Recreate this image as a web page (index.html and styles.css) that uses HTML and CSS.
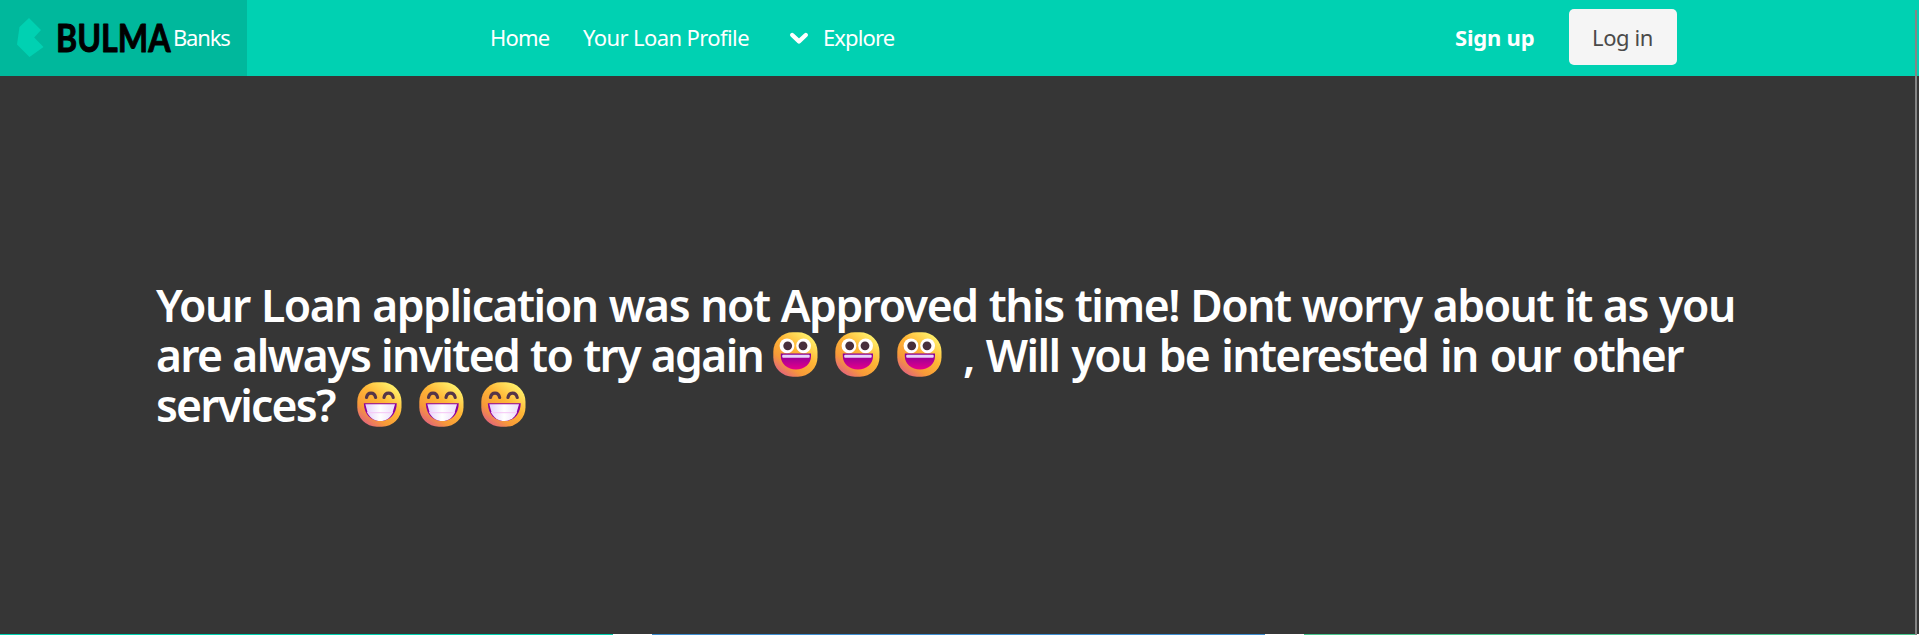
FILE: index.html
```html
<!DOCTYPE html>
<html lang="en">
<head>
<meta charset="utf-8">
<title>Bulma Banks</title>
<link rel="stylesheet" href="styles.css">
</head>
<body>
<svg class="defs" width="0" height="0" aria-hidden="true">
  <defs>
    <linearGradient id="skin" x1="0.85" y1="0.1" x2="0.2" y2="0.95">
      <stop offset="0" stop-color="#fff06a"/><stop offset="0.4" stop-color="#ffb636"/><stop offset="0.75" stop-color="#f79a38"/><stop offset="1" stop-color="#e4657a"/>
    </linearGradient>
    <linearGradient id="mouth" x1="0" y1="0" x2="0" y2="1">
      <stop offset="0" stop-color="#85009a"/><stop offset="1" stop-color="#e6008a"/>
    </linearGradient>
    <linearGradient id="teeth" x1="0" y1="0" x2="1" y2="0">
      <stop offset="0" stop-color="#e4cffa"/><stop offset="0.5" stop-color="#fff"/><stop offset="1" stop-color="#ecdcfb"/>
    </linearGradient>
    <symbol id="open" viewBox="0 0 45 45">
      <rect x="0.3" y="0.3" width="44.2" height="44.4" rx="19.5" fill="url(#skin)"/>
      <circle cx="14" cy="13.8" r="7.4" fill="#fff"/><circle cx="30.6" cy="13.8" r="7.4" fill="#fff"/>
      <circle cx="14.7" cy="13.8" r="4.4" fill="#482f3c"/><circle cx="30" cy="13.8" r="4.4" fill="#482f3c"/>
      <path d="M7.8 21.5H38V24C38 32 31.5 37.5 23 37.5S7.8 32 7.8 24Z" fill="url(#mouth)"/>
      <rect x="9.2" y="22.8" width="27.5" height="3" rx="1" fill="#e8d4fb"/>
    </symbol>
    <symbol id="grin" viewBox="0 0 45 45">
      <rect x="0.3" y="0.3" width="44.2" height="44.4" rx="19.5" fill="url(#skin)"/>
      <path d="M9.5 15.5C10.5 9.7 17.5 9.7 18.6 15.5M27 15.5C28 9.7 35 9.7 36.2 15.5" fill="none" stroke="#553548" stroke-width="3.2" stroke-linecap="round"/>
      <path d="M6.8 21.3H39.8C39.3 32.5 33 39 23.3 39S7.3 32.5 6.8 21.3Z" fill="#8c00a0"/>
      <path d="M8.3 22.2H38L35.2 32C32.5 36.5 28.5 39 23.3 39S13.8 36.5 11 32Z" fill="url(#teeth)"/>
      <path d="M10 30.7H36" stroke="#f5c5f5" stroke-width="1"/>
    </symbol>
  </defs>
</svg>
<nav class="navbar">
  <a class="brand">
    <svg class="logo" width="174" height="76" viewBox="0 0 174 76">
      <path d="M29 18L41 30L34.2 37.5L43.5 47L29.5 57L17 44.5L19.5 27Z" fill="#00d1b2"/>
      <text class="wordmark" x="56" y="51.5" textLength="114.5" lengthAdjust="spacingAndGlyphs">BULMA</text>
    </svg>
    <span class="banks">Banks</span>
  </a>
  <div class="menu">
    <a class="home">Home</a>
    <a class="profile">Your Loan Profile</a>
    <a class="explore">
      <svg width="20" height="14" viewBox="0 0 20 14"><path d="M3.2 4L10 10.4L16.8 4" fill="none" stroke="#fff" stroke-width="4.4" stroke-linecap="round" stroke-linejoin="round"/></svg>
      <span>Explore</span>
    </a>
  </div>
  <div class="actions">
    <a class="signup">Sign up</a>
    <a class="login">Log in</a>
  </div>
</nav>
<main class="hero">
  <h1 class="title">
    <span class="line first">Your Loan application was not Approved this time! Dont worry about it as you</span>
    <span class="line second">
      <span class="invite">are always invited to try again</span>
      <span class="faces"><svg><use href="#open"/></svg><svg><use href="#open"/></svg><svg><use href="#open"/></svg></span>
      <span class="ask">, Will you be interested in our other</span>
    </span>
    <span class="line third">
      <span class="services">services?</span>
      <span class="faces"><svg><use href="#grin"/></svg><svg><use href="#grin"/></svg><svg><use href="#grin"/></svg></span>
    </span>
  </h1>
</main>
<div class="cards"><i class="teal"></i><i class="blue"></i><i class="green"></i></div>
<div class="scrollbar"></div>
</body>
</html>
```

FILE: styles.css
```css
* { box-sizing: border-box; }
body {
  margin: 0;
  height: 635px;
  overflow: hidden;
  position: relative;
  display: flex;
  flex-direction: column;
  background: #fff;
  color: #fff;
  font-family: "Noto Sans", "Open Sans", sans-serif;
  font-size: 22px;
}
.defs { position: absolute; }
.navbar {
  height: 76px;
  flex: none;
  display: flex;
  align-items: center;
  background: #00d1b2;
  line-height: 32px;
  white-space: nowrap;
}
.brand {
  width: 247px;
  height: 76px;
  display: flex;
  align-items: center;
  background: #00b89c;
}
.logo { display: block; flex: none; overflow: visible; }
.wordmark {
  font-family: Lato, sans-serif;
  font-size: 39px;
  font-weight: 700;
  fill: #000;
  stroke: #000;
  stroke-width: 1;
  stroke-linejoin: round;
}
.banks { padding-bottom: 2px; margin-left: -1px; letter-spacing: -1.2px; }
.menu { display: flex; padding: 0 0 2px 243px; }
.home { width: 93px; letter-spacing: -0.8px; }
.profile { width: 206px; letter-spacing: -0.6px; }
.explore { display: flex; align-items: center; gap: 14px; letter-spacing: -0.9px; }
.explore svg { margin-top: 2px; }
.actions { margin-left: auto; margin-right: 242px; display: flex; align-items: center; padding-bottom: 2px; }
.signup { width: 114px; font-weight: 700; letter-spacing: -0.2px; }
.login {
  width: 108px;
  height: 56px;
  padding: 12px 0 0 23px;
  border-radius: 5px;
  background: #f5f5f5;
  color: #4a4a4a;
  letter-spacing: -0.4px;
}
.hero {
  height: 558px;
  flex: none;
  display: flex;
  align-items: center;
  padding: 0 156px;
  background: #363636;
}
.title { margin: 0; font-size: 44.44px; font-weight: 600; line-height: 50px; word-spacing: 1px; }
.line { display: flex; height: 50px; white-space: nowrap; }
.first { letter-spacing: -1.46px; }
.invite { width: 617px; letter-spacing: -1.65px; }
.ask { padding-left: 21px; letter-spacing: -1.65px; word-spacing: 2.2px; }
.services { width: 201px; letter-spacing: -1.8px; }
.faces { display: flex; gap: 17px; padding-top: 2px; }
.faces svg { width: 45px; height: 45px; }
.cards { height: 1px; flex: none; display: flex; gap: 39px; }
.cards i { width: 613px; height: 1px; flex: none; }
.teal { background: #00d1b2; }
.blue { background: #3e8ed0; }
.green { background: #48c78e; }
.scrollbar {
  position: absolute;
  right: 2px;
  top: 10px;
  bottom: 0;
  width: 2px;
  background: #858585;
}
```
